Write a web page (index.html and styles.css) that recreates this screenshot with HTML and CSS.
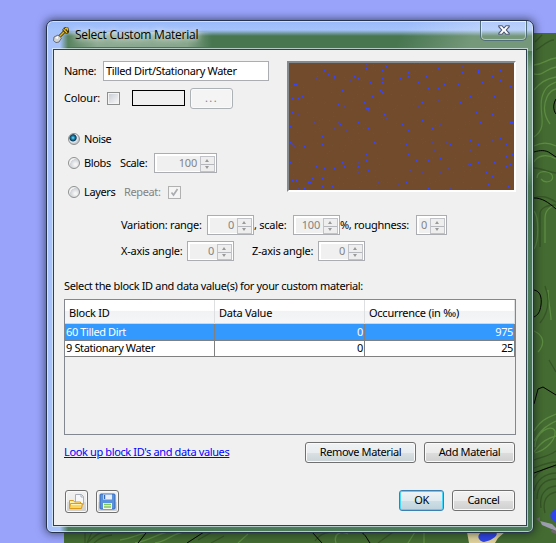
FILE: index.html
```html
<!DOCTYPE html>
<html lang="en">
<head>
<meta charset="utf-8">
<title>Select Custom Material</title>
<link rel="stylesheet" href="styles.css">
</head>
<body>
<svg class="terrain" viewBox="64 33 492 510">
  <rect x="64" y="33" width="492" height="510" fill="#446b31"/>
  <g fill="none" stroke="#5c8c42" stroke-width="1.3">
    <path d="M534 65c10-1 13-6 22-7M534 74c10 2 11-5 22-7M534 90c6-7 11-11 22-13M534 137c15-10 4-24 8-40 3-10 7-12 14-15M550 124c-5-7-8-16-3-27 2-4 5-7 9-8M534 146c8-4 14-4 22 0M534 162c3-6 12-9 22-3M537 178c0-8 12-8 15-3 3 7-7 9-11 4M534 211c5 6 5 30 0 38M545 243v-25c0-8 6-12 11-13M551 320c0-8-3-18-3-30M534 331c9 4 12 12 4 21M534 431c6-10 12-13 22-17M534 441c8-13 14-16 22-20M534 452c8-11 14-14 22-16M535 447c0-14 16-24 20-16 1 8-7 18-20 22M120 540c14-2 18-6 32-9M135 543c14-2 21-9 36-12M155 543c11-1 15-8 28-11M238 543l10-9M336 543c-3-9 5-13 12-9M408 543l7-11M424 543v-10"/>
  </g>
  <g fill="none" stroke="#355526" stroke-width="1.3">
    <path d="M535 42l7-7M536 50c8-5 12-10 18-10M534 168c8 0 14 4 22 5M534 198c8-3 14-1 22 4M540 247v-33c0-6 7-9 16-9M540 323c8-10 11-21 5-37M549 360l7 12M534 460c8-3 15-4 22-9M534 468c8-3 15-6 22-6M534 478c5-7 12-12 22-11M534 491c3-12 10-17 22-18M537 499c0-14 9-20 19-20M541 508c-2-13 4-21 15-22M545 513c-3-13 2-19 11-21M85 532v11M92 532l-5 11M103 532c-8 2-12 8-16 11M112 535c-9 1-14 4-18 8M198 540l14-8M211 543l13-7M315 541c4-6 8-8 15-9M378 543l15-11"/>
  </g>
  <g fill="none" stroke="#000">
    <path d="M534 152c6-2 12-2 16 1l6 4M534 198c8 0 14 4 22 11M556 99c-3 5-3 11 0 15M534 290c6 1 8 7 7 15-1 7-3 10-7 12M534 404l4-15 5-2 13 8M534 473l22-8M146 533l-8 10M204 532l-17 11M312 532l10 11M361 532c5 3 6 7 9 11"/>
  </g>
  <path fill="#ddd09a" d="M467 532h38l-7 6-3 5h-26z"/>
  <path fill="#2f45e8" d="M482 532h14c3 3-3 8-12 10-6-1-8-7-2-10zM556 509c-8 3-7 10 0 14z"/>
  <path fill="#9c9eb0" d="M540 521l12 3 4 4v3l-14-6z"/><path fill="#706670" d="M536 519l4-2v5zM552 529l4 2v3l-5-2z"/>
</svg>

<section class="window">
  <header class="titlebar">
    <svg class="shovel" viewBox="0 0 16 16" width="16" height="16">
      <path d="M6 10l6-6" stroke="#332800" stroke-width="3"/>
      <path d="M6 10l7-7" stroke="#e3b51f" stroke-width="1.6"/>
      <path d="M10 2l4 4M11 2l3-1 1 3-1 2" fill="none" stroke="#332800" stroke-width="2.6"/>
      <path d="M10.500 2.300l3.500 3.500M12 2l2-1 .8 2.500" fill="none" stroke="#e8be22" stroke-width="1.400"/>
      <path d="M1 10l4-2 3.500 3L6 15l-3 .6-2.500-2z" fill="#d3d5d4" stroke="#55585c" stroke-width=".8"/>
      <path d="M2 11l3-2v3z" fill="#fff"/>
    </svg>
    <h1>Select Custom Material</h1>
    <button class="close" aria-label="Close">
      <svg viewBox="0 0 12 10" width="12" height="10"><path d="M.8.7H4L6 3 8 .7h3.200v1L8.300 5l2.900 3.300v1H8L6 7 4 9.300H.8v-1L3.700 5 .8 1.700z" fill="#fff" stroke="#4d5875" stroke-width="1.100"/></svg>
    </button>
  </header>

  <main class="client">
    <div class="top">
      <div class="settings">
        <div class="row name-row"><label class="w-key">Name:</label><div class="textbox">Tilled Dirt/Stationary Water</div></div>
        <div class="row colour-row"><label class="w-key">Colour:</label><i class="check"></i><i class="swatch"></i><button class="btn dots" disabled>...</button></div>
        <div class="row noise-row"><i class="radio on"></i><label>Noise</label></div>
        <div class="row blobs-row"><i class="radio"></i><label class="w-blobs">Blobs</label><label class="w-scale">Scale:</label><div class="spin s63"><b>100</b><i></i></div></div>
        <div class="row layers-row"><i class="radio"></i><label class="w-layers">Layers</label><label class="w-repeat dim">Repeat:</label><i class="check ticked"><svg viewBox="0 0 9 9" width="9" height="9"><path d="M1.500 4.500L3.500 7 7.500 1" fill="none" stroke="#aaacb0" stroke-width="1.700"/></svg></i></div>
      </div>
      <div class="preview"><svg id="noise" viewBox="0 0 225 127" width="225" height="127" shape-rendering="crispEdges"></svg></div>
    </div>

    <div class="row variation"><label class="w-var">Variation: range:</label><div class="spin"><b>0</b><i></i></div><label class="w-vs">, scale:</label><div class="spin"><b>100</b><i></i></div><label class="w-rough">%, roughness:</label><div class="spin s31"><b>0</b><i></i></div></div>
    <div class="row axes"><label class="w-axis">X-axis angle:</label><div class="spin"><b>0</b><i></i></div><label class="w-axis z">Z-axis angle:</label><div class="spin"><b>0</b><i></i></div></div>

    <p class="prompt">Select the block ID and data value(s) for your custom material:</p>
    <div class="table">
      <div class="tr th"><span>Block ID</span><span>Data Value</span><span>Occurrence (in ‰)</span></div>
      <div class="tr selected"><span>60 Tilled Dirt</span><span>0</span><span>975</span></div>
      <div class="tr"><span>9 Stationary Water</span><span>0</span><span>25</span></div>
    </div>

    <div class="row actions"><a href="#">Look up block ID's and data values</a><button class="btn remove">Remove Material</button><button class="btn add">Add Material</button></div>
    <div class="row bottom">
      <button class="btn tool" aria-label="Open"><svg viewBox="0 0 17 17" width="17" height="17">
        <path d="M7.500 1.500h6l2 2v8h-8z" fill="#f7f8fa" stroke="#a9b0bb"/><path d="M13 1.500v2.500h2.500" fill="none" stroke="#a9b0bb"/>
        <path d="M1.500 15V7.500h4l1 1.500h6V15z" fill="#fff2b8" stroke="#dc9b1c"/><path d="M1.500 15.500l1-5h12l-1 5z" fill="#fbd65e" stroke="#dc9b1c"/><path d="M3 11.500h10" stroke="#fff3ba"/></svg></button>
      <button class="btn tool" aria-label="Save"><svg viewBox="0 0 17 17" width="17" height="17">
        <rect x="1" y="1" width="15" height="15" rx="1" fill="#5b92dc" stroke="#3669b9"/><path d="M4 1.500h9v5H4z" fill="#e8effa"/><path d="M5.500 2v4" stroke="#3669b9" stroke-width="1.500"/><path d="M4 10h9v6H4z" fill="#f4faf0"/><path d="M5 11.500h7M5 14h7" stroke="#7fc558" stroke-width="1.400"/></svg></button>
      <button class="btn ok">OK</button><button class="btn cancel">Cancel</button>
    </div>
  </main>
</section>
<script src="noise.js"></script>
</body>
</html>
```
FILE: styles.css
```css
* { box-sizing: border-box; }
body { margin: 0; width: 556px; height: 543px; overflow: hidden; position: relative; background: #99a3fa; font: 11px/14px "Noto Sans", sans-serif; color: #000; letter-spacing: -.38px; }
.terrain { position: absolute; left: 64px; top: 33px; width: 492px; height: 510px; }
.window {
  position: absolute; left: 46px; top: 20px; width: 488px; height: 513px; padding: 0 6px 6px;
  border: 1px solid #26314a; border-radius: 7px 7px 6px 6px;
  background:
    linear-gradient(90deg, transparent 12px, rgba(255,255,255,.38) 50px, rgba(255,255,255,.35) 140px, transparent 165px) 0 11px/100% 15px no-repeat,
    linear-gradient(115deg, transparent 72%, rgba(255,255,255,.25) 87%) 0 0/100% 30px no-repeat,
    linear-gradient(#99b9fa, #a4c2fb 9px, rgba(153,185,250,0) 15px) 0 0/100% 30px no-repeat,
    linear-gradient(90deg, #a8c3fc 13px, rgba(168,195,252,0) 21px),
    linear-gradient(#47764f 28px, #7aa084 50px, #759b7e 130px, #467453 165px, #4c7d5b 270px, #3f6a4b 430px, #4b7b58);
  box-shadow: inset 0 0 0 1px rgba(225,240,250,.7), 0 0 8px 1px rgba(10,20,30,.6);
}
.titlebar { height: 28px; display: flex; align-items: flex-start; }
.shovel { margin: 6px 0 0; }
h1 { flex: 1; margin: 6px 0 0 6px; font: 12px/16px "Open Sans", sans-serif; letter-spacing: -.25px; text-shadow: 0 0 6px #fff, 0 0 8px rgba(255,255,255,.7); }
.close { width: 47px; height: 20px; margin: 0; padding: 0 0 2px; display: grid; place-items: center; border: 1px solid #526d7a; border-top: 0; border-radius: 0 0 5px 5px; background: transparent; box-shadow: inset 0 0 0 1px rgba(255,255,255,.45); }
.client { height: 477px; padding: 11px 10px 0; background: #f0f0f0; border: 1px solid #2e4150; box-shadow: 0 0 0 1px rgba(225,240,245,.7); }
.row { display: flex; align-items: center; white-space: nowrap; }
.top { display: flex; justify-content: space-between; height: 154px; }
.settings { display: flex; flex-direction: column; }
.name-row { height: 20px; }
.w-key { width: 39px; }
.textbox { width: 166px; height: 20px; padding: 2px; background: #fff; border: 1px solid #abadb3; letter-spacing: -.35px; }
.colour-row { height: 22px; margin-top: 6px; }
.colour-row .w-key { width: 43px; letter-spacing: -.2px; }
.check { width: 13px; height: 13px; border: 1px solid #8e8f8f; background: linear-gradient(135deg, #c9ced6, #f6f6f6) content-box; padding: 1px; box-shadow: inset 0 0 0 1px #f4f4f4; }
.ticked { display: grid; background: #f5f5f5; border-color: #b1b1b1; }
.swatch { width: 53px; height: 16px; margin: 0 5px 0 12px; border: 1px solid #000; }
.btn { font: inherit; letter-spacing: inherit; padding: 0 0 1px; height: 21px; border: 1px solid #707070; border-radius: 3px; background: linear-gradient(#f2f2f2, #ebebeb 50%, #ddd 51%, #cfcfcf); box-shadow: inset 0 0 0 1px #fafafa; }
.btn.dots { width: 43px; border-color: #adb2b5; background: #f4f4f4; color: #838383; letter-spacing: 1.4px; }
.noise-row { height: 14px; margin-top: 23px; }
.radio { width: 12px; height: 12px; margin: 0 4px 0 4px; border-radius: 50%; border: 1px solid #8e8f8f; background: radial-gradient(circle at 65% 65%, #f5f5f5 10%, #cfd3d7 55%, #f2f2f2 60%); }
.radio.on { background: radial-gradient(circle at 40% 38%, #7fe2f5 0, #1680ac 20%, #0c3654 37%, #e9edf0 48%, #c4cbd2 65%); }
.blobs-row { height: 20px; margin-top: 7px; }
.w-blobs { width: 36px; }
.w-scale { width: 34px; }
.layers-row { height: 14px; margin-top: 12px; }
.w-layers { width: 40px; }
.w-repeat { width: 44px; }
.dim { color: #838383; }
.spin { display: flex; width: 47px; height: 20px; padding: 2px 1px 1px 2px; border: 1px solid #abadb3; background: #fff; color: #838383; }
.spin.s63 { width: 63px; }
.spin.s31 { width: 31px; }
.spin b { flex: 1; height: 15px; font-weight: 400; line-height: 14px; text-align: right; padding-right: 3px; background: #f0f0f0; letter-spacing: -.2px; }
.spin i { width: 15px; height: 16px; border: 1px solid #c1c3c8; position: relative; background: linear-gradient(#b5b7bc, #b5b7bc) 0 7px/100% 1px no-repeat, #eee; }
.spin i::before, .spin i::after { content: ""; position: absolute; left: 4px; border: 2.5px solid transparent; }
.spin i::before { top: 2px; border-top: 0; border-bottom: 3px solid #999; }
.spin i::after { bottom: 2px; border-bottom: 0; border-top: 3px solid #999; }
.preview { width: 229px; height: 131px; border: 2px solid; border-color: #858a8e #fff #fff #858a8e; background: #724b2c; }
.preview svg { display: block; }
.variation { height: 20px; padding-left: 57px; }
.w-var { width: 86px; letter-spacing: -.28px; }
.w-vs { width: 39px; letter-spacing: -.25px; }
.w-rough { width: 76px; letter-spacing: -.3px; }
.axes { height: 20px; margin-top: 6px; padding-left: 57px; }
.w-axis { width: 66px; letter-spacing: -.25px; }
.w-axis.z { margin-left: 18px; }
.prompt { height: 14px; margin: 18px 0 6px; white-space: nowrap; letter-spacing: -.34px; }
.table { width: 452px; height: 136px; border: 1px solid #828790; }
.tr { display: grid; grid-template-columns: 150px 150px 150px; height: 16px; line-height: 14px; background: #fff; }
.tr span { padding: 0 1px; border-right: 1px solid #808080; border-bottom: 1px solid #808080; white-space: nowrap; }
.tr span + span { text-align: right; }
.tr.th { height: 24px; line-height: 25px; background: linear-gradient(#fff 45%, #f1f2f4 50%, #f5f6f7); border-bottom: 1px solid #d5d5d5; letter-spacing: -.25px; }
.tr.th span { padding-left: 4px; border-bottom: 0; border-color: #dedfe1; text-align: left; }
.tr.selected { background: #39f; color: #fff; height: 17px; line-height: 15px; }
.actions { height: 21px; margin-top: 7px; padding-right: 1px; }
.actions a { flex: 1; padding-bottom: 2px; color: #00f; text-underline-offset: 1px; letter-spacing: -.37px; }
.btn.remove { width: 111px; margin-right: 8px; background: linear-gradient(#f0f2f3, #e9edf0 50%, #d9e1e5 51%, #cbd3d7); }
.btn.add { width: 91px; }
.bottom { height: 23px; margin-top: 27px; align-items: flex-start; padding: 0 1px; }
.btn.tool { width: 23px; height: 23px; margin-right: 8px; padding: 0; display: grid; place-items: center; }
.btn.ok { width: 45px; margin: 0 8px 0 auto; border-color: #3c7fb1; background: linear-gradient(#eef3f5, #e1eaef 50%, #cedee5 51%, #bfd3dd); box-shadow: inset 0 0 0 1px #47d8fb; }
.btn.cancel { width: 63px; }
```
FILE: noise.js
```js
// Water specks, as [x, y] pairs in thirds of a pixel.
const specks = [
  134,196, 145,211, 122,216, 159,217, 155,224, 122,228, 174,230, 234,229, 290,193, 291,200, 331,199, 270,206, 267,217, 297,211, 319,211, 319,220, 319,235, 246,236, 255,241, 280,241, 143,237, 129,240, 61,253, 53,254, 44,262, 81,261, 166,248, 205,233, 283,248, 284,253, 248,258, 290,262, 260,265, 319,248, 372,236, 352,250, 365,244, 397,230, 405,222, 397,216, 415,190, 430,191, 416,214, 449,230, 467,214, 485,205, 512,235, 512,241, 520,248, 559,216, 548,225, 560,232, 597,205, 605,211, 607,216, 597,217, 575,237, 639,213, 650,210, 647,230, 672,211, 680,229, 671,242, 703,259, 706,259, 639,243, 617,248, 576,261, 546,253, 457,264, 487,265, 427,248, 458,277, 505,253, 514,300, 496,302, 553,306, 568,296, 583,288, 604,282, 615,278, 605,293, 655,289, 662,307, 686,305, 684,322, 663,326, 650,328, 649,343, 686,334, 706,323, 628,321, 599,336, 538,322, 500,323, 447,322, 438,308, 411,314, 418,290, 374,287, 344,284, 312,271, 319,277, 262,283, 289,290, 243,282, 197,272, 192,285, 166,277, 96,275, 78,288, 65,296, 48,294, 107,293, 92,310, 148,308, 185,313, 227,305, 265,308, 277,325, 271,325, 252,323, 309,321, 308,308, 356,325, 363,316, 323,343, 170,337, 170,348, 92,337, 49,337, 44,352, 51,365, 43,379, 62,398, 125,375, 128,362, 128,386, 134,390, 137,359, 112,351, 159,360, 192,373, 243,379, 260,386, 277,385, 268,373, 247,366, 245,401, 292,400, 320,359, 333,396, 377,374, 395,391, 422,361, 438,361, 459,349, 469,359, 477,376, 469,386, 464,391, 434,373, 490,380, 507,395, 545,389, 568,373, 578,363, 611,366, 652,371, 668,361, 701,367, 709,367, 656,349, 643,400, 656,408, 673,415, 704,406, 703,430, 690,434, 696,449, 691,470, 709,464, 670,460, 631,437, 605,433, 583,420, 584,434, 560,434, 550,416, 521,434, 493,435, 466,419, 434,419, 440,414, 446,424, 437,431, 405,414, 385,417, 390,434, 373,430, 397,463, 419,480, 447,476, 424,499, 455,482, 467,473, 490,462, 493,474, 514,478, 538,475, 583,493, 583,508, 583,515, 560,500, 563,513, 532,518, 596,464, 605,487, 630,503, 630,517, 654,486, 650,509, 691,500, 703,493, 676,518, 671,545, 679,550, 696,558, 637,552, 628,534, 584,562, 561,546, 538,557, 508,567, 478,544, 463,550, 455,565, 408,544, 391,548, 356,536, 332,547, 315,545, 300,556, 297,530, 269,527, 296,512, 275,511, 309,493, 303,476, 271,482, 269,464, 314,433, 299,431, 294,428, 248,418, 224,421, 217,413, 206,436, 200,453, 167,437, 158,453, 152,460, 137,433, 122,430, 139,409, 85,439, 68,437, 62,461, 43,427, 68,478, 68,487, 43,487, 99,487, 120,499, 128,521, 145,506, 173,506, 182,486, 197,488, 203,500, 247,499, 242,510, 226,494, 214,534, 190,533, 200,549, 185,555, 164,550, 168,560, 138,560, 139,536, 109,536, 103,547, 97,547, 86,537, 68,554, 61,541, 50,523, 48,541, 85,565, 250,563, 255,545, 417,536, 649,528
];
const ns = "http://www.w3.org/2000/svg";
const field = document.getElementById("noise");
function speck(x, y, color) {
  const r = document.createElementNS(ns, "rect");
  r.setAttribute("x", x); r.setAttribute("y", y);
  r.setAttribute("width", 1); r.setAttribute("height", 1);
  r.setAttribute("fill", color);
  field.appendChild(r);
}
// Fainter specks, scattered with a fixed seed.
let seed = 12345;
function next(n) {
  seed = (seed * 1103515245 + 12345) % 2147483648;
  return Math.floor(seed / 2147483648 * n);
}
for (let i = 0; i < 150; i++) speck(next(225), next(127), "#54489a");
for (let i = 0; i < specks.length; i += 2)
  speck(Math.floor((specks[i] - 38) / 3), Math.floor((specks[i + 1] - 189) / 3), "#3446ff");
```
